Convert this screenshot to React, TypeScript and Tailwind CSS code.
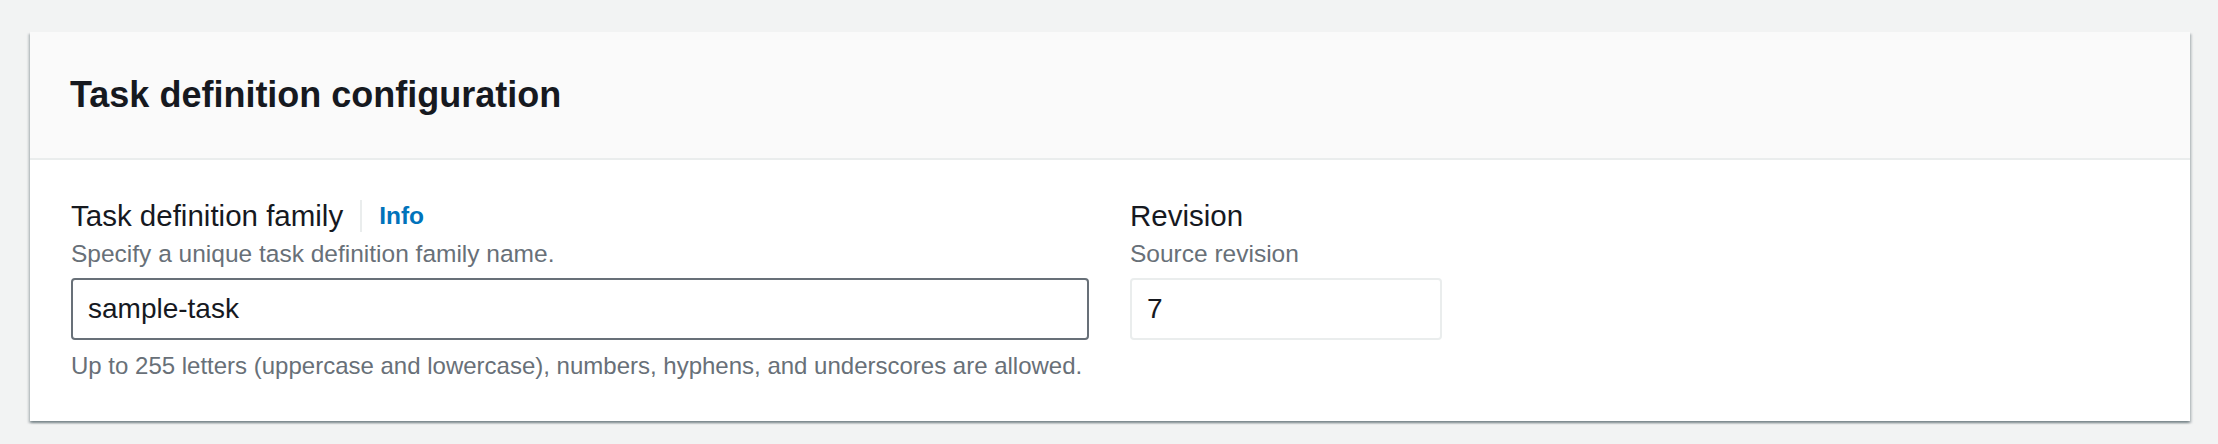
export default function App() {
  const font = { fontFamily: '"Liberation Sans", Arial, sans-serif' };
  return (
    <div className="min-h-[444px] w-full bg-[#f2f3f3] px-[30px] pt-[32px]" style={font}>
      <div className="w-[2160px] bg-white shadow-[0_2px_2px_0_rgba(0,28,36,0.3),2px_2px_2px_0_rgba(0,28,36,0.15),-2px_2px_2px_0_rgba(0,28,36,0.15)]">
        <div className="flex h-[128px] items-center border-b-2 border-[#eaeded] bg-[#fafafa] px-[40px]">
          <h2 className="text-[36px] font-bold leading-none text-[#16191f]">Task definition configuration</h2>
        </div>
        <div className="flex gap-[41px] px-[41px] pb-[37px] pt-[38px]">
          <div className="flex w-[1018px] flex-col">
            <div className="flex h-[36px] items-center">
              <span className="text-[29.5px] text-[#16191f]">Task definition family</span>
              <span className="mx-[17px] h-[32px] w-[2px] bg-[#eaeded]" />
              <span className="text-[24.5px] font-bold text-[#0073bb]">Info</span>
            </div>
            <div className="mt-[2px] text-[24.5px] leading-[36px] text-[#687078]">Specify a unique task definition family name.</div>
            <div className="mt-[6px] flex h-[62px] items-center rounded-[4px] border-2 border-[#687078] px-[15px] text-[28px] text-[#16191f]">
              sample-task
            </div>
            <div className="mt-[8px] text-[24px] leading-[36px] text-[#687078]">
              Up to 255 letters (uppercase and lowercase), numbers, hyphens, and underscores are allowed.
            </div>
          </div>
          <div className="flex w-[312px] flex-col">
            <div className="flex h-[36px] items-center text-[29.5px] text-[#16191f]">Revision</div>
            <div className="mt-[2px] text-[24.5px] leading-[36px] text-[#687078]">Source revision</div>
            <div className="mt-[6px] flex h-[62px] items-center rounded-[4px] border-2 border-[#eaeded] px-[15px] text-[28px] text-[#16191f]">
              7
            </div>
          </div>
        </div>
      </div>
    </div>
  );
}
